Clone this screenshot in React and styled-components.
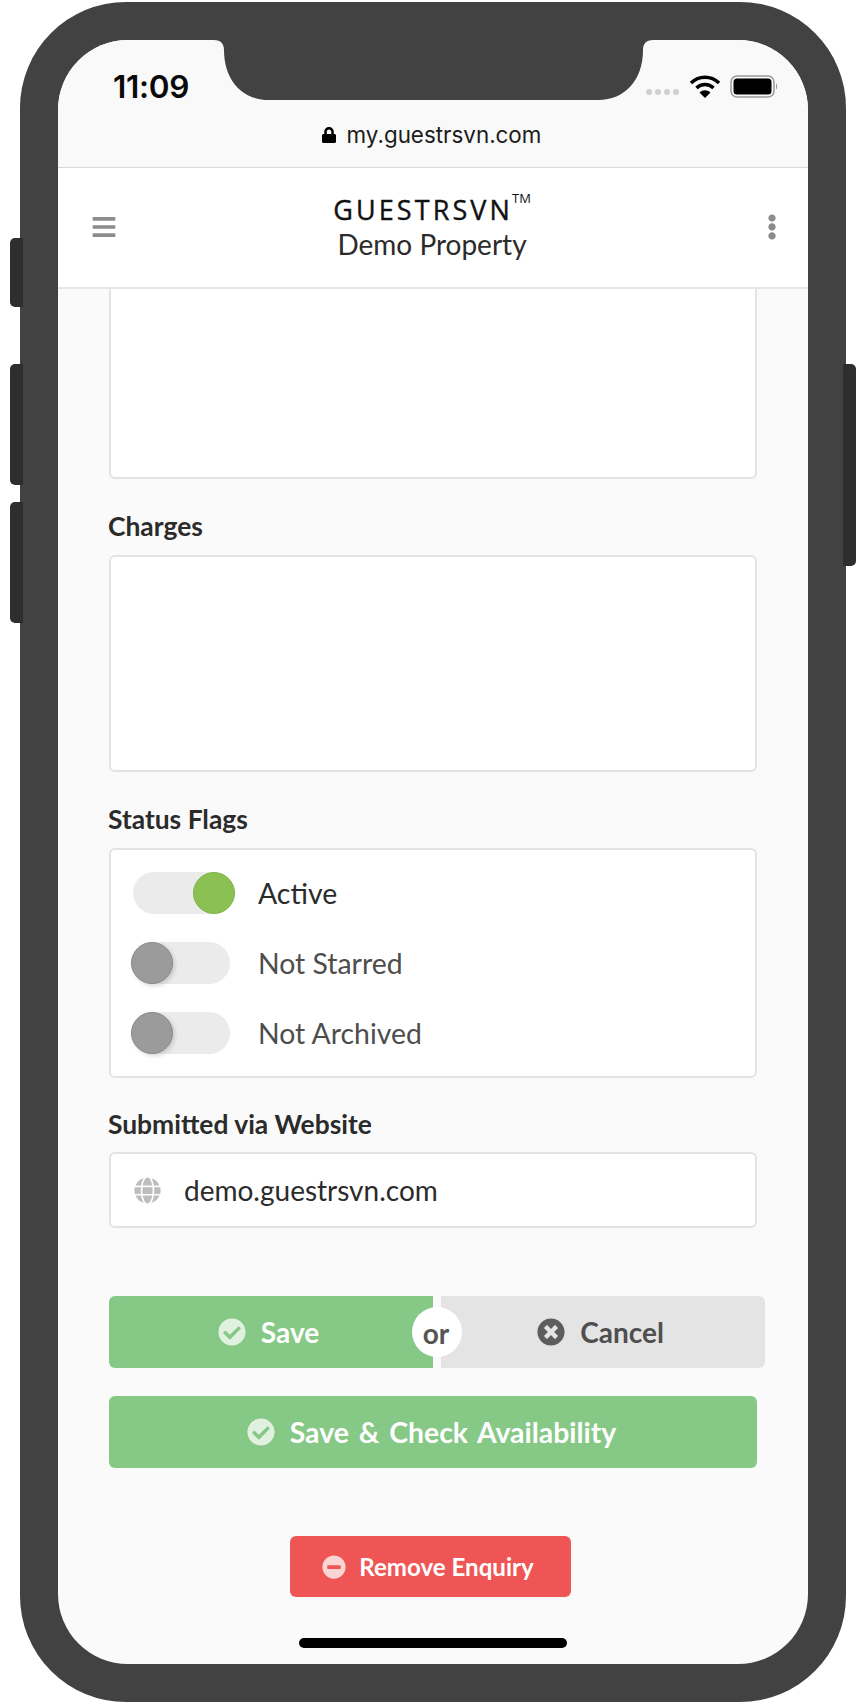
import React from "react";
import styled, { createGlobalStyle } from "styled-components";
import { FaCheckCircle, FaTimesCircle, FaMinusCircle, FaGlobe, FaBars, FaEllipsisV, FaLock } from "react-icons/fa";

const Global = createGlobalStyle`
  html, body { margin: 0; padding: 0; background: #fff; }
  * { box-sizing: border-box; }
`

const Page = styled.div`
  width: 866px;
  height: 1704px;
  padding: 2px 20px;
  font-family: Lato, "Liberation Sans", sans-serif;
  color: #2b2b2b;
`
const Phone = styled.div`
  position: relative;
  width: 826px;
  height: 1700px;
  padding: 38px;
  background: #424242;
  border-radius: 106px;
`
const SideKey = styled.div`
  position: absolute;
  top: ${props => props.$top}px;
  height: ${props => props.$height}px;
  width: 13px;
  background: #2e2e2e;
  ${props => props.$right
    ? "right: -10px; border-radius: 0 5px 5px 0;"
    : "left: -10px; border-radius: 5px 0 0 5px;"}
`
const Screen = styled.div`
  position: relative;
  height: 100%;
  display: flex;
  flex-direction: column;
  background: #fafafa;
  border-radius: 70px;
  overflow: hidden;
`
const Notch = styled.svg`
  position: absolute;
  top: 0;
  left: 156px;
`
const BrowserBar = styled.div`
  height: 128px;
  flex: none;
  padding-top: 29px;
  border-bottom: 1px solid #d9d9d9;
  background: #f9f9f9;
`
const StatusRow = styled.div`
  height: 34px;
  display: flex;
  align-items: center;
  justify-content: space-between;
  padding: 0 30px 0 55px;
`
const Clock = styled.div`
  font-family: Inter, sans-serif;
  font-weight: 600;
  font-size: 31.5px;
  letter-spacing: -0.3px;
  color: #0a0a0a;
`
const StatusIcons = styled.div`
  display: flex;
  align-items: center;
  gap: 10px;
`
const SignalDots = styled.div`
  display: flex;
  gap: 3px;
  margin-top: 11px;
  margin-right: 1px;
`
const SignalDot = styled.span`
  width: 6px;
  height: 6px;
  border-radius: 50%;
  background: #d0d0d0;
`
const Address = styled.div`
  margin-top: 17px;
  display: flex;
  align-items: center;
  justify-content: center;
  gap: 11px;
  font-family: Inter, sans-serif;
  font-size: 22.4px;
  color: #1c1c1c;
  line-height: 30px;
  margin-left: -3px;
  svg { width: 14px; height: 18px; color: #000; }
`
const Header = styled.header`
  height: 121px;
  flex: none;
  display: grid;
  grid-template-columns: 1fr auto 1fr;
  align-items: center;
  padding: 0 28px 2px;
  background: #fff;
  border-bottom: 2px solid #e6e6e6;
  svg { color: #8c8c8c; }
`
const MenuIcon = styled(FaBars)`
  margin-left: 5px;
`
const MoreIcon = styled(FaEllipsisV)`
  justify-self: end;
  margin-right: -5px;
`
const Brand = styled.div`
  display: flex;
  flex-direction: column;
  align-items: center;
  padding: 4px 2px 0 0;
`
const BrandName = styled.div`
  font-family: "Open Sans", sans-serif;
  font-size: 27px;
  line-height: 32px;
  letter-spacing: 3.1px;
  color: #111;
  -webkit-text-stroke: 0.4px #111;
  sup {
    font-size: 13px;
    line-height: 0;
    letter-spacing: 0;
    margin-left: -1px;
    vertical-align: 17px;
    -webkit-text-stroke: 0;
  }
`
const BrandSub = styled.div`
  font-size: 28px;
  line-height: 37px;
  color: #2b2b2b;
`
const Content = styled.main`
  flex: 1;
  padding: 0 51px;
`
const Box = styled.div`
  height: ${props => props.$height}px;
  background: #fff;
  border: 2px solid #e3e3e3;
  border-radius: 6px;
  ${props => props.$clipped && "border-top: none; border-radius: 0 0 6px 6px;"}
`
const Label = styled.label`
  display: block;
  margin: ${props => props.$tight ? "31px 0 13px -1px" : "32px 0 14px -1px"};
  font-size: 26.4px;
  font-weight: 700;
  line-height: 30px;
  color: #2b2b2b;
`
const FlagBox = styled(Box)`
  display: flex;
  flex-direction: column;
  gap: 28px;
  padding: 22px 0 0 22px;
`
const FlagRow = styled.div`
  display: flex;
  align-items: center;
  gap: 28px;
  height: 42px;
`
const Toggle = styled.div`
  position: relative;
  width: 97px;
  height: 42px;
  border-radius: 21px;
  background: #ebebeb;
`
const Knob = styled.span`
  position: absolute;
  top: 0;
  width: 42px;
  height: 42px;
  border-radius: 50%;
  left: ${props => props.$on ? "60px" : "-2px"};
  background: ${props => props.$on ? "#8bc152" : "#9b9b9b"};
  border: 1px solid ${props => props.$on ? "#7db548" : "#8a8a8a"};
  box-shadow: ${props => props.$on ? "none" : "2px 2px 4px rgba(0,0,0,0.15)"};
`
const FlagText = styled.span`
  font-size: 28.4px;
  color: ${props => props.$on ? "#2b2b2b" : "#4d4d4d"};
`
const WebsiteBox = styled(Box)`
  display: flex;
  align-items: center;
  gap: 23px;
  padding-left: 23px;
  font-size: 28px;
  color: #2b2b2b;
  svg { color: #bdbdbd; }
`
const SplitRow = styled.div`
  position: relative;
  display: grid;
  grid-template-columns: 324px 324px;
  gap: 8px;
  margin-top: 68px;
  width: 656px;
`
const ActionButton = styled.button`
  height: ${props => props.$height || 72}px;
  width: 100%;
  display: flex;
  align-items: center;
  justify-content: center;
  gap: ${props => props.$gap || 15}px;
  padding: 0 ${props => props.$shift || 5}px 0 0;
  border: none;
  border-radius: ${props => props.$radius || "6px"};
  background: ${props => props.$background || "#86c886"};
  color: ${props => props.$color || "#fff"};
  font-family: Lato, sans-serif;
  font-weight: 700;
  font-size: ${props => props.$size || 28}px;
  word-spacing: ${props => props.$wordSpacing || 0}px;
  white-space: pre;
  svg { opacity: ${props => props.$iconOpacity || 0.75}; }
`
const OrBadge = styled.span`
  position: absolute;
  top: 11px;
  left: 303px;
  width: 50px;
  height: 50px;
  display: flex;
  align-items: center;
  justify-content: center;
  padding: 2px 2px 0 0;
  border-radius: 50%;
  background: #fff;
  color: #555;
  font-weight: 700;
  font-size: 28px;
`
const CheckRow = styled.div`
  margin-top: 28px;
`
const RemoveRow = styled.div`
  margin-top: 68px;
  padding-right: 6px;
  display: flex;
  justify-content: center;
`
const RemoveButton = styled(ActionButton)`
  width: 281px;
`
const HomeBar = styled.div`
  position: absolute;
  left: 241px;
  bottom: 16px;
  width: 268px;
  height: 10px;
  border-radius: 5px;
  background: #000;
`

function Wifi() {
  return (
    <svg width="30" height="23" viewBox="0 0 30 23">
      <path d="M1 8 A20 20 0 0 1 29 8" fill="none" stroke="#000" strokeWidth="3.4" />
      <path d="M6.5 13 A12 12 0 0 1 23.5 13" fill="none" stroke="#000" strokeWidth="3.4" />
      <path d="M15 23 L9.5 17.5 A8 8 0 0 1 20.5 17.5 Z" fill="#000" />
    </svg>
  )
}

function Battery() {
  return (
    <svg width="48" height="23" viewBox="0 0 48 23">
      <rect x="1" y="1" width="43" height="21" rx="6" fill="none" stroke="#999" strokeWidth="1.5" />
      <rect x="3.5" y="3.5" width="38" height="16" rx="3.5" fill="#000" />
      <path d="M46 8.5 C47.5 9 47.5 14 46 14.5 Z" fill="#999" />
    </svg>
  )
}

export default function App() {
  return (
    <Page>
      <Global />
      <Phone>
        <SideKey $top={236} $height={69} />
        <SideKey $top={362} $height={121} />
        <SideKey $top={500} $height={121} />
        <SideKey $right $top={362} $height={202} />
        <Screen>
          <Notch width="439" height="60" viewBox="0 0 439 60">
            <path d="M0 0 C7 0 10 4 10 10 C10 40 28 60 55 60 H384 C411 60 429 40 429 10 C429 4 432 0 439 0 Z" fill="#424242" />
          </Notch>
          <BrowserBar>
            <StatusRow>
              <Clock>11:09</Clock>
              <StatusIcons>
                <SignalDots>
                  <SignalDot /><SignalDot /><SignalDot /><SignalDot />
                </SignalDots>
                <Wifi />
                <Battery />
              </StatusIcons>
            </StatusRow>
            <Address><FaLock />my.guestrsvn.com</Address>
          </BrowserBar>
          <Header>
            <MenuIcon size={26} />
            <Brand>
              <BrandName>GUESTRSVN<sup>TM</sup></BrandName>
              <BrandSub>Demo Property</BrandSub>
            </Brand>
            <MoreIcon size={26} />
          </Header>
          <Content>
            <Box $clipped $height={190} />
            <Label>Charges</Label>
            <Box $height={217} />
            <Label>Status Flags</Label>
            <FlagBox $height={230}>
              <FlagRow>
                <Toggle><Knob $on /></Toggle>
                <FlagText $on>Active</FlagText>
              </FlagRow>
              <FlagRow>
                <Toggle><Knob /></Toggle>
                <FlagText>Not Starred</FlagText>
              </FlagRow>
              <FlagRow>
                <Toggle><Knob /></Toggle>
                <FlagText>Not Archived</FlagText>
              </FlagRow>
            </FlagBox>
            <Label $tight>Submitted via Website</Label>
            <WebsiteBox $height={76}>
              <FaGlobe size={27} />
              demo.guestrsvn.com
            </WebsiteBox>
            <SplitRow>
              <ActionButton $radius="6px 0 0 6px">
                <FaCheckCircle size={28} />Save
              </ActionButton>
              <ActionButton $radius="0 6px 6px 0" $background="#e4e4e4" $color="#4f4f4f" $iconOpacity={0.9}>
                <FaTimesCircle size={28} />Cancel
              </ActionButton>
              <OrBadge>or</OrBadge>
            </SplitRow>
            <CheckRow>
              <ActionButton $shift={3} $size={28.4} $wordSpacing={3}>
                <FaCheckCircle size={28} />Save &amp; Check Availability
              </ActionButton>
            </CheckRow>
            <RemoveRow>
              <RemoveButton $height={61} $background="#ef5555" $size={24.1} $gap={13} $shift={4}>
                <FaMinusCircle size={24} />Remove Enquiry
              </RemoveButton>
            </RemoveRow>
          </Content>
          <HomeBar />
        </Screen>
      </Phone>
    </Page>
  )
}
